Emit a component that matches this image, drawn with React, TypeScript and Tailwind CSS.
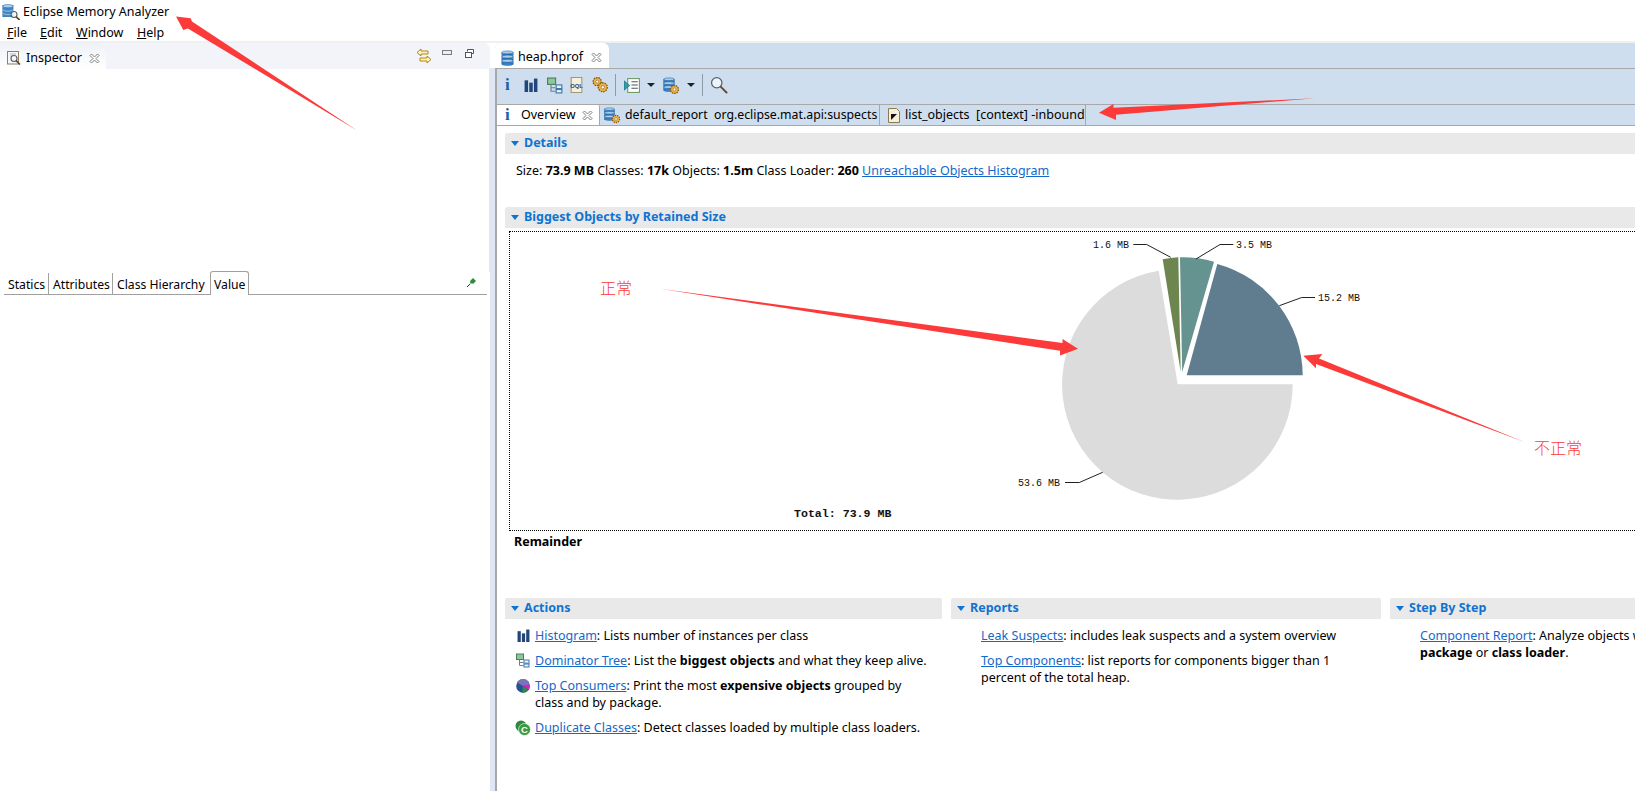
import React from "react";

const Db = ({ className = "" }: { className?: string }) => (
  <svg viewBox="0 0 16 16" className={className}>
    {[1, 5.5, 10].map((y) => (
      <g key={y}>
        <rect x="2" y={y + 1} width="12" height="3.5" fill="#3f86c8" stroke="#1f5f9e" strokeWidth="0.6" />
        <ellipse cx="8" cy={y + 1} rx="6" ry="1.6" fill="#a9cdec" stroke="#1f5f9e" strokeWidth="0.6" />
        <ellipse cx="8" cy={y + 4.5} rx="6" ry="1.4" fill="#3f86c8" stroke="#1f5f9e" strokeWidth="0.6" />
      </g>
    ))}
  </svg>
);

const Gear = ({ x, y, r = 3.4 }: { x: number; y: number; r?: number }) => (
  <g>
    <circle cx={x} cy={y} r={r} fill="#e8b44c" stroke="#8a5a12" strokeWidth="1.2" strokeDasharray="1.4 0.8" />
    <circle cx={x} cy={y} r={r * 0.36} fill="#fff" stroke="#8a5a12" strokeWidth="0.5" />
  </g>
);

const Lens = ({ x, y, r = 3.5 }: { x: number; y: number; r?: number }) => (
  <g>
    <circle cx={x} cy={y} r={r} fill="#f2f7fb" fillOpacity="0.8" stroke="#55606a" strokeWidth="1.1" />
    <path d={`M${x + r * 0.7} ${y + r * 0.7}L${x + r * 2} ${y + r * 2}`} stroke="#5a4526" strokeWidth="1.6" />
  </g>
);

const CloseX = ({ className = "" }: { className?: string }) => (
  <svg viewBox="0 0 11 11" className={className}>
    <path d="M1 2.5 2.5 1 5.5 4 8.5 1 10 2.5 7 5.5 10 8.5 8.5 10 5.5 7 2.5 10 1 8.5 4 5.5Z" fill="#fff" stroke="#707070" strokeWidth="0.9" />
  </svg>
);

const Bars = ({ className = "" }: { className?: string }) => (
  <svg viewBox="0 0 12 12" className={className}>
    <rect x="0.5" y="2" width="3" height="10" fill="#23467a" />
    <rect x="4.5" y="4" width="3" height="8" fill="#23467a" />
    <rect x="8.5" y="0.5" width="3" height="11.5" fill="#23467a" />
  </svg>
);

const TreeIcon = ({ className = "" }: { className?: string }) => (
  <svg viewBox="0 0 14 14" className={className}>
    <rect x="0.5" y="0.5" width="7" height="5.5" fill="#8fc79a" stroke="#4a7f58" />
    <path d="M3.5 6V12H7.5M3.5 9H7.5" fill="none" stroke="#6f7f93" />
    <rect x="8" y="6.5" width="5" height="3.2" fill="#e8f2fb" stroke="#3f77ad" />
    <rect x="8" y="10.5" width="5" height="3" fill="#e8f2fb" stroke="#3f77ad" />
  </svg>
);

const Pie = ({ className = "" }: { className?: string }) => (
  <svg viewBox="0 0 14 14" className={className}>
    <circle cx="7" cy="7" r="6.8" fill="#24548f" />
    <path d="M7 7 13.6 5.5A6.8 6.8 0 0 1 12.6 11Z" fill="#e517c9" />
    <path d="M7 7 12.6 11A6.8 6.8 0 0 1 6 13.7Z" fill="#2c8a4a" />
    <path d="M7 7 1 3.5A6.8 6.8 0 0 1 13.6 5.5Z" fill="#7a73ba" />
  </svg>
);

const DupIcon = ({ className = "" }: { className?: string }) => (
  <svg viewBox="0 0 16 16" className={className}>
    <circle cx="6" cy="6" r="5.5" fill="#2f8a3c" />
    <circle cx="9.5" cy="9.5" r="6" fill="#3c9a45" stroke="#fff" strokeWidth="0.6" />
    <text x="9.5" y="13" textAnchor="middle" fontSize="9.5" fontWeight="700" fill="#fff" fontFamily="Liberation Sans, sans-serif">C</text>
  </svg>
);

const Triangle = () => (
  <span className="mr-[5px] ml-[6px] inline-block h-0 w-0 border-x-[4px] border-t-[5px] border-x-transparent border-t-[#0f73d2]" />
);

const Section = ({ title, className = "" }: { title: string; className?: string }) => (
  <div className={`flex h-[21px] items-center rounded-t-[2px] bg-[#e9e9e9] font-bold text-[#0f73d2] ${className}`}>
    <Triangle />
    {title}
  </div>
);

const A = ({ children }: { children: React.ReactNode }) => (
  <span className="text-[#1468c8] underline">{children}</span>
);

const ActionRow = ({ icon, children }: { icon: React.ReactNode; children: React.ReactNode }) => (
  <div className="mb-[8px] flex">
    <div className="flex h-[17px] w-[30px] shrink-0 items-center pl-[12px]">{icon}</div>
    <div className="w-[396px] leading-[17px]">{children}</div>
  </div>
);

const U = ({ children }: { children: string }) => <span className="underline">{children}</span>;

const Caret = ({ className = "" }: { className?: string }) => (
  <div className={`h-0 w-0 border-x-[4px] border-t-[4px] border-x-transparent border-t-[#222] ${className}`} />
);

export default function App() {
  return (
    <div className="relative h-[791px] w-[1635px] overflow-hidden bg-white font-['Noto_Sans','Noto_Sans_CJK_SC',sans-serif] text-[12.5px] text-black">
      <div className="flex h-[24px] items-center pl-[2px]">
        <svg viewBox="0 0 18 16" className="h-[16px] w-[18px]">
          <g transform="scale(0.85)">
            <rect x="1" y="2" width="12" height="13" fill="#3f86c8" stroke="#1f5f9e" strokeWidth="0.6" />
            <ellipse cx="7" cy="2.5" rx="6" ry="2" fill="#a9cdec" stroke="#1f5f9e" strokeWidth="0.6" />
            <path d="M1 7c2 2 10 2 12 0M1 11c2 2 10 2 12 0" fill="none" stroke="#bcd8f0" strokeWidth="0.8" />
          </g>
          <Lens x={12} y={10.5} r={3} />
        </svg>
        <span className="ml-[3px]">Eclipse Memory Analyzer</span>
      </div>
      <div className="flex h-[17px] items-center pl-[7px] leading-[17px]">
        <span className="w-[33px]"><U>F</U>ile</span>
        <span className="w-[36px]"><U>E</U>dit</span>
        <span className="w-[61px]"><U>W</U>indow</span>
        <span><U>H</U>elp</span>
      </div>
      <div className="h-[2px] bg-[#f0f0f0]" />

      <div className="flex h-[748px]">
        <div className="flex w-[490px] shrink-0 flex-col">
          <div className="flex h-[26px] items-center rounded-tr-[6px] bg-[#f2f4f9]">
            <div className="flex h-full w-[106px] items-center rounded-tr-[8px] bg-gradient-to-b from-[#eef1f7] to-white pl-[7px] pt-[4px]">
              <svg viewBox="0 0 15 15" className="h-[15px] w-[15px]">
                <rect x="0.5" y="0.5" width="11" height="12.5" fill="#f7f7f7" stroke="#8f7f68" />
                <path d="M3 3h6M3 5h3" stroke="#b4b4b4" />
                <Lens x={7} y={7.5} r={3} />
              </svg>
              <span className="ml-[4px]">Inspector</span>
              <CloseX className="ml-[7px] h-[11px] w-[11px]" />
            </div>
            <div className="flex-1" />
            <svg viewBox="0 0 16 16" className="h-[16px] w-[16px]">
              <path d="M1 4.5 5 1v2h7v3H5v2Z" fill="#fdf3c8" stroke="#b8860b" />
              <path d="M15 11.5 11 15v-2H4v-3h7V8Z" fill="#fdf3c8" stroke="#b8860b" />
            </svg>
            <div className="mb-[8px] ml-[10px] h-[5px] w-[10px] border border-[#7b7b7b] bg-[#e9edf4]" />
            <svg viewBox="0 0 9 9" className="mb-[6px] ml-[13px] mr-[16px] h-[9px] w-[9px]">
              <path d="M2.5 2.5V.5h6v4h-2" fill="#fff" stroke="#555" />
              <rect x="0.5" y="3.5" width="6" height="5" fill="#fff" stroke="#555" />
            </svg>
          </div>
          <div className="h-[203px] border-r border-[#dfe6f2]" />
          <div className="ml-[4px] mr-[3px] flex h-[23px] items-end border-b border-[#a0a0a0] text-[12.2px]">
            <div className="flex h-[21px] w-[45px] items-center border-r border-[#a0a0a0] pl-[4px] pt-[3px]">Statics</div>
            <div className="flex h-[21px] w-[64px] items-center border-r border-[#a0a0a0] pl-[4px] pt-[3px]">Attributes</div>
            <div className="flex h-[21px] w-[97px] items-center pl-[4px] pt-[3px]">Class Hierarchy</div>
            <div className="-mb-px flex h-[24px] w-[39px] items-center rounded-t-[3px] border border-b-0 border-[#a0a0a0] bg-white pl-[3px] pt-[3px]">Value</div>
            <div className="flex-1" />
            <svg viewBox="0 0 9 9" className="mb-[7px] mr-[11px] h-[9px] w-[9px]">
              <path d="M3 3 6 0l3 3-3 3-.8-.8-1.6.6-.6-.6.5-1.4Z" fill="#2f8a3c" />
              <path d="M3 6 0 9" stroke="#333" />
            </svg>
          </div>
          <div className="flex-1" />
        </div>

        <div className="flex w-[5px] shrink-0 flex-col">
          <div className="h-[25px] bg-white" />
          <div className="flex-1 bg-[#e0e6f4]" />
        </div>

        <div className="flex w-[1140px] shrink-0 flex-col">
          <div className="flex h-[25px] items-stretch rounded-tl-[6px] bg-[#cfdeee]">
            <div className="flex w-[114px] items-center rounded-t-[6px] bg-white pl-[5px] pt-[4px]">
              <Db className="h-[18px] w-[15px]" />
              <span className="ml-[3px]">heap.hprof</span>
              <CloseX className="ml-[8px] h-[11px] w-[11px]" />
            </div>
          </div>
          <div className="flex min-h-0 flex-1 flex-col border-l-2 border-[#a8a8a8]">
            <div className="flex h-[36px] items-center border-t border-[#a8a8a8] bg-[#cfdeee] pb-[3px]">
              <span className="ml-[8px] w-[7px] font-['Liberation_Serif',serif] text-[17px] font-bold text-[#1b5fa8]">i</span>
              <Bars className="ml-[12px] h-[14px] w-[14px]" />
              <TreeIcon className="ml-[9px] h-[17px] w-[16px]" />
              <svg viewBox="0 0 14 15" className="ml-[6px] h-[16px] w-[15px]">
                <path d="M2 .5h10v14H2Z" fill="#f6efd9" stroke="#a39676" />
                <text x="7" y="10" textAnchor="middle" fontSize="5.5" fontWeight="700" fill="#23467a" fontFamily="Liberation Sans, sans-serif">OQL</text>
              </svg>
              <svg viewBox="0 0 16 16" className="ml-[7px] h-[18px] w-[18px]">
                <Gear x={5.5} y={5} r={3.6} />
                <Gear x={10.5} y={10} r={4} />
              </svg>
              <div className="ml-[6px] h-[22px] w-px bg-[#8e9aa6]" />
              <svg viewBox="0 0 16 16" className="ml-[8px] h-[17px] w-[17px]">
                <rect x="3.5" y="1.5" width="11" height="13" fill="#fff" stroke="#6a9a5e" />
                <path d="M7 4.5h6M7 7.5h6M7 10.5h6" stroke="#555" />
                <path d="M0 3.5 5.5 8 0 12.5Z" fill="#2f9aa8" stroke="#1b5f6c" strokeWidth="0.5" />
              </svg>
              <Caret className="ml-[6px]" />
              <div className="relative ml-[7px] h-[19px] w-[18px]">
                <Db className="h-[17px] w-[14px]" />
                <svg viewBox="0 0 10 10" className="absolute bottom-0 right-0 h-[11px] w-[11px]">
                  <Gear x={5} y={5} r={3.6} />
                </svg>
              </div>
              <Caret className="ml-[7px]" />
              <div className="ml-[7px] h-[22px] w-px bg-[#8e9aa6]" />
              <svg viewBox="0 0 16 16" className="ml-[7px] h-[18px] w-[18px]">
                <Lens x={6} y={6} r={4.6} />
              </svg>
            </div>

            <div className="flex h-[22px] items-stretch border-y border-[#a8a8a8] bg-[#cfdeee]">
              <div className="flex w-[103px] items-center rounded-tr-[2px] border-r border-[#a8a8a8] bg-white pl-[8px]">
                <span className="w-[14px] font-['Liberation_Serif',serif] text-[17px] font-bold text-[#1b5fa8]">i</span>
                <span className="ml-[2px]">Overview</span>
                <CloseX className="ml-[6px] h-[11px] w-[11px]" />
              </div>
              <div className="flex w-[280px] items-center border-r border-[#a8a8a8] pl-[3px]">
                <div className="relative h-[18px] w-[18px]">
                  <Db className="h-[16px] w-[13px]" />
                  <svg viewBox="0 0 10 10" className="absolute bottom-0 right-0 h-[10px] w-[10px]">
                    <Gear x={5} y={5} r={3.6} />
                  </svg>
                </div>
                <span className="ml-[4px] whitespace-pre text-[12.3px]">default_report  org.eclipse.mat.api:suspects</span>
              </div>
              <div className="flex w-[206px] items-center border-r border-[#a8a8a8] pl-[8px]">
                <svg viewBox="0 0 12 15" className="h-[15px] w-[12px]">
                  <path d="M.5.5h8l3 3v11H.5Z" fill="#f6efd9" stroke="#8a7a52" />
                  <path d="M3 6h6L3 12Z" fill="#111" />
                </svg>
                <span className="ml-[5px] whitespace-pre">list_objects  [context] -inbound</span>
              </div>
            </div>

            <div className="flex-1 overflow-hidden bg-white pl-[8px] pt-[7px]">
              <Section title="Details" className="w-[1200px]" />
              <div className="mt-[8px] h-[45px] pl-[11px] leading-[17px] whitespace-nowrap">
                Size: <b>73.9 MB</b> Classes: <b>17k</b> Objects: <b>1.5m</b> Class Loader: <b>260</b> <A>Unreachable Objects Histogram</A>
              </div>
              <Section title="Biggest Objects by Retained Size" className="w-[1200px]" />
              <div className="ml-[4px] mt-[3px] h-[300px] w-[1200px] border border-dotted border-black">
                <svg viewBox="510 232 1200 298" className="h-[298px] w-[1200px]">
                  <path d="M1177.7 384.3H1292.7A115.3 115.3 0 1 1 1158.7 270.7Z" fill="#dcdcdc" />
                  <path d="M1186.7 375.3H1302.7A116 116 0 0 0 1217.3 264Z" fill="#5f7d8f" />
                  <path d="M1182.2 372L1214 261.7A116 116 0 0 0 1180 257.3Z" fill="#65938f" />
                  <path d="M1180.7 372L1178.3 257.3A116 116 0 0 0 1162.7 259.3Z" fill="#6d8650" />
                  <g fill="none" stroke="#222" strokeWidth="1">
                    <path d="M1133.3 244.5H1146.7L1170.7 257.3" />
                    <path d="M1196 259L1220 244.5H1233.3" />
                    <path d="M1279.3 305.7L1301.7 297.5H1315" />
                    <path d="M1065 482.5H1079.3L1102.7 472.3" />
                  </g>
                  <g fontFamily="Liberation Mono, monospace" fontSize="10" fill="#111">
                    <text x="1093" y="248">1.6 MB</text>
                    <text x="1236" y="248">3.5 MB</text>
                    <text x="1318" y="301">15.2 MB</text>
                    <text x="1018" y="486">53.6 MB</text>
                    <text x="794" y="517" fontWeight="700" fontSize="11.6">Total: 73.9 MB</text>
                  </g>
                </svg>
              </div>
              <div className="ml-[9px] mt-[2px] h-[65px] font-bold leading-[17px]">Remainder</div>
              <div className="flex">
                <div className="w-[437px] shrink-0">
                  <Section title="Actions" />
                  <div className="pt-[8px]">
                    <ActionRow icon={<Bars className="h-[13px] w-[13px]" />}>
                      <A>Histogram</A>: Lists number of instances per class
                    </ActionRow>
                    <ActionRow icon={<TreeIcon className="-ml-[1px] h-[15px] w-[14px]" />}>
                      <A>Dominator Tree</A>: List the <b>biggest objects</b> and what they keep alive.
                    </ActionRow>
                    <ActionRow icon={<Pie className="-ml-[1px] h-[14px] w-[14px]" />}>
                      <A>Top Consumers</A>: Print the most <b>expensive objects</b> grouped by class and by package.
                    </ActionRow>
                    <ActionRow icon={<DupIcon className="-ml-[2px] h-[16px] w-[16px]" />}>
                      <span className="whitespace-nowrap"><A>Duplicate Classes</A>: Detect classes loaded by multiple class loaders.</span>
                    </ActionRow>
                  </div>
                </div>
                <div className="ml-[9px] w-[430px] shrink-0">
                  <Section title="Reports" />
                  <div className="pl-[30px] pr-[50px] pt-[8px] leading-[17px]">
                    <p className="mb-[8px] whitespace-nowrap"><A>Leak Suspects</A>: includes leak suspects and a system overview</p>
                    <p><A>Top Components</A>: list reports for components bigger than 1 percent of the total heap.</p>
                  </div>
                </div>
                <div className="ml-[9px] w-[500px] shrink-0">
                  <Section title="Step By Step" />
                  <div className="w-[480px] pl-[30px] pt-[8px] leading-[17px]">
                    <A>Component Report</A>: Analyze objects which belong to a common root <br />
                    <b>package</b> or <b>class loader</b>.
                  </div>
                </div>
              </div>
            </div>
          </div>
        </div>
      </div>

      <svg className="pointer-events-none absolute left-0 top-0 h-[791px] w-[1635px]" viewBox="0 0 1635 791">
        <g fill="#fc3a3a">
          <path d="M176 16.5 190.7 18.3 192 21.6 357.5 130.8 187.9 28.4 183.3 30Z" />
          <path d="M1099 112.7 1113.5 104 1113.5 107.8 1315 98.3 1116 114.8 1116 120Z" />
          <path d="M1078 348.7 1062.5 339 1062.5 343 660 288.8 1060 350.8 1060 355.5Z" />
          <path d="M1303.3 355.7 1322.3 354 1319 358.5 1525 442.3 1316 364 1316 368.3Z" />
        </g>
      </svg>
      <div className="absolute left-[600px] top-[279px] text-[16px] leading-[18px] font-light text-[#fc3a3a]">正常</div>
      <div className="absolute left-[1534px] top-[439px] text-[16px] leading-[18px] font-light text-[#fc3a3a]">不正常</div>
    </div>
  );
}
